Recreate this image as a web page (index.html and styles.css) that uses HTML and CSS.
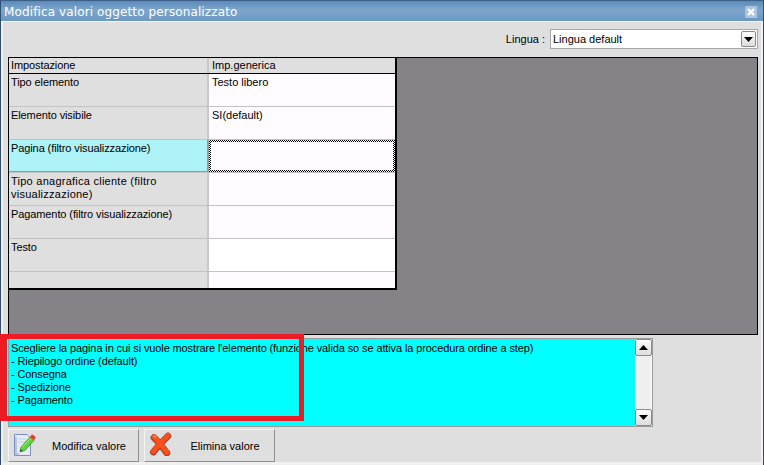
FILE: index.html
```html
<!DOCTYPE html>
<html lang="it">
<head>
<meta charset="utf-8">
<title>Modifica valori oggetto personalizzato</title>
<link rel="stylesheet" href="styles.css">
</head>
<body>
<div class="window">
  <div class="titlebar">
    <span class="title">Modifica valori oggetto personalizzato</span>
    <svg class="close" width="12" height="12" viewBox="0 0 12 12"><rect width="12" height="12" rx="1" fill="#a9c4de"/><path d="M3 3 L9 9 M9 3 L3 9" stroke="#fff" stroke-width="2.4"/></svg>
  </div>
  <div class="content">
    <div class="lang-row">
      <span class="lang-label">Lingua :</span>
      <div class="select">
        <span class="select-text">Lingua default</span>
        <span class="sbtn"><svg width="9" height="5" viewBox="0 0 9 5"><path d="M0 0H9L4.5 5Z" fill="#000"/></svg></span>
      </div>
    </div>
    <div class="grid-area">
      <div class="grid">
        <div class="row head">
          <div class="key">Impostazione</div>
          <div class="val">Imp.generica</div>
        </div>
        <div class="row">
          <div class="key">Tipo elemento</div>
          <div class="val">Testo libero</div>
        </div>
        <div class="row">
          <div class="key">Elemento visibile</div>
          <div class="val">SI(default)</div>
        </div>
        <div class="row">
          <div class="key selected">Pagina (filtro visualizzazione)</div>
          <div class="val focus"></div>
        </div>
        <div class="row">
          <div class="key wide">Tipo anagrafica cliente (filtro visualizzazione)</div>
          <div class="val"></div>
        </div>
        <div class="row">
          <div class="key">Pagamento (filtro visualizzazione)</div>
          <div class="val"></div>
        </div>
        <div class="row">
          <div class="key">Testo</div>
          <div class="val white"></div>
        </div>
        <div class="row last">
          <div class="key"></div>
          <div class="val"></div>
        </div>
      </div>
    </div>
    <div class="help">
      <div class="help-text">Scegliere la pagina in cui si vuole mostrare l'elemento (funzione valida so se attiva la procedura ordine a step)<br>- Riepilogo ordine (default)<br>- Consegna<br>- Spedizione<br>- Pagamento</div>
      <div class="scrollbar">
        <span class="sbtn tall"><svg width="9" height="5" viewBox="0 0 9 5"><path d="M0 5H9L4.5 0Z" fill="#000"/></svg></span>
        <span class="track"></span>
        <span class="sbtn tall"><svg width="9" height="5" viewBox="0 0 9 5"><path d="M0 0H9L4.5 5Z" fill="#000"/></svg></span>
      </div>
    </div>
    <div class="buttons">
      <button class="btn">
        <svg class="ico" width="24" height="24" viewBox="0 0 24 24">
          <path d="M1.5 2.5H14L17.5 6V23.5H1.5Z" fill="#e6ebf8" stroke="#7d8fc0"/>
          <path d="M3 5V22H6" stroke="#a9b9e0" fill="none" stroke-width="1.5"/>
          <path d="M5 7H13M5 10H13" stroke="#c3cee8"/>
          <path d="M7 20L8 15L17 5L21 8.5L12 18.5Z" fill="#5fd23c" stroke="#3c9a28" stroke-width=".8"/>
          <path d="M9 15.5L17.5 6.5" stroke="#aef08c"/>
          <path d="M17 5L19 2.2L22.8 5L21 8.5Z" fill="#e2402c"/>
          <path d="M7 20L7.6 17L9.6 18.8Z" fill="#444"/>
        </svg>
        <span class="btn-label">Modifica valore</span>
      </button>
      <button class="btn">
        <svg class="ico" width="24" height="24" viewBox="0 0 24 24">
          <path d="M5 5.5C8 8 12 13 18 21M19 4C15 8 9 14 4.5 20" stroke="#7fe0e8" stroke-width="6.5" stroke-linecap="round" fill="none" transform="translate(-.8 .6)"/>
          <path d="M5 5.5C8 8 12 13 18 21M19 4C15 8 9 14 4.5 20" stroke="#c32c10" stroke-width="6.5" stroke-linecap="round" fill="none"/>
          <path d="M5 5C8 7.5 12 12.5 18 20.5M19 3.5C15 7.5 9 13.5 4.5 19.5" stroke="#f8501e" stroke-width="5" stroke-linecap="round" fill="none"/>
          <path d="M4.5 3.8L7 5" stroke="#ffb090" stroke-linecap="round"/>
        </svg>
        <span class="btn-label">Elimina valore</span>
      </button>
    </div>
    <div class="annotation"></div>
  </div>
</div>
</body>
</html>
```
FILE: styles.css
```css
* { box-sizing: border-box; }
html, body { margin: 0; padding: 0; }
body { width: 764px; height: 465px; overflow: hidden; font-family: "Liberation Sans", Arial, sans-serif; font-size: 11px; color: #000; }
.window { width: 764px; height: 465px; display: flex; flex-direction: column; background: #dfdfdf; border: 1px solid #2f4d70; border-top-color: #3c5f88; }
.titlebar { height: 21px; flex: none; display: flex; align-items: center; justify-content: space-between; padding: 2px 6px 0 3px; background: linear-gradient(#5c8ab8, #7da6cd 45%, #6b97c2); border-bottom: 1px solid #f0f4f8; }
.title { font-family: "DejaVu Sans", sans-serif; font-size: 12px; color: #fff; letter-spacing: .12px; white-space: nowrap; }
.close { display: block; }
.content { position: relative; flex: 1; display: flex; flex-direction: column; border: 2px solid #f0f0f0; border-top: 0; border-bottom-width: 3px; padding: 7px 3px 0 5px; }
.lang-row { height: 20px; display: flex; justify-content: flex-end; align-items: center; gap: 5px; margin-bottom: 8px; }
.lang-label { white-space: nowrap; }
.select { width: 208px; height: 20px; background: #fff; border: 1px solid #a8a8a8; display: flex; align-items: center; justify-content: space-between; padding: 0 1px 0 2px; }
.sbtn { display: flex; align-items: center; justify-content: center; width: 15px; height: 16px; background: linear-gradient(#fff, #dcdcdc); border: 1px solid #8a8a8a; border-radius: 2px; flex: none; }
.sbtn.tall { width: 17px; height: 17px; }
.grid-area { height: 278px; flex: none; background: #858387; border: 1px solid #000; }
.grid { width: 388px; height: 232px; background: #fff; border-right: 2px solid #000; border-bottom: 2px solid #000; display: flex; flex-direction: column; overflow: hidden; }
.row { height: 33px; flex: none; display: flex; border-bottom: 1px solid #c4c2c4; }
.row.head { height: 16px; border-bottom: 1px solid #000; }
.row.last { flex: 1; height: auto; border-bottom: 0; }
.key { width: 200px; flex: none; background: #dfdfdf; border-right: 2px solid #c8c8c8; padding: 2px 2px 0 2px; line-height: 13px; letter-spacing: -.1px; overflow: hidden; }
.key.wide { letter-spacing: .25px; }
.val { flex: 1; background: #fffbff; padding: 2px 3px 0 3px; line-height: 13px; white-space: nowrap; }
.val.white { background: #fff; }
.head .key, .head .val { background: #dfdfdf; padding-top: 1px; line-height: 13px; }
.selected { background: #adf3f8; border-right-color: #9a9a9a; border-bottom: 1px solid #9a9a9a; }
.focus { border: 2px solid transparent; background: linear-gradient(#fffbff, #fffbff) padding-box, repeating-conic-gradient(#000 0 25%, #fff 0 50%) 0 0 / 2px 2px border-box; }
.help { flex: none; height: 89px; width: 645px; margin-top: 3px; background: #00ffff; border: 1px solid #9a9a9a; display: flex; justify-content: space-between; }
.help-text { padding: 2.5px 0 0 2px; line-height: 13.2px; letter-spacing: -.115px; white-space: nowrap; }
.scrollbar { width: 17px; height: 100%; background: #f0f0f0; display: flex; flex-direction: column; justify-content: space-between; border-right: 1px solid #fff; }
.track { flex: 1; }
.buttons { display: flex; gap: 5px; margin-top: 2px; }
.btn { width: 131px; height: 33px; display: flex; align-items: center; padding: 0 0 0 4px; background: #dfdfdf; border: 1px solid #8f8f8f; border-top-color: #f4f4f4; border-left-color: #f4f4f4; font: inherit; color: #000; }
.ico { flex: none; margin-top: -4px; }
.btn-label { flex: 1; text-align: center; padding-left: 3px; white-space: nowrap; }
.annotation { position: absolute; left: -3px; top: 312px; width: 304px; height: 87px; border: 5px solid #ed1c24; border-left-width: 7px; pointer-events: none; }
```
